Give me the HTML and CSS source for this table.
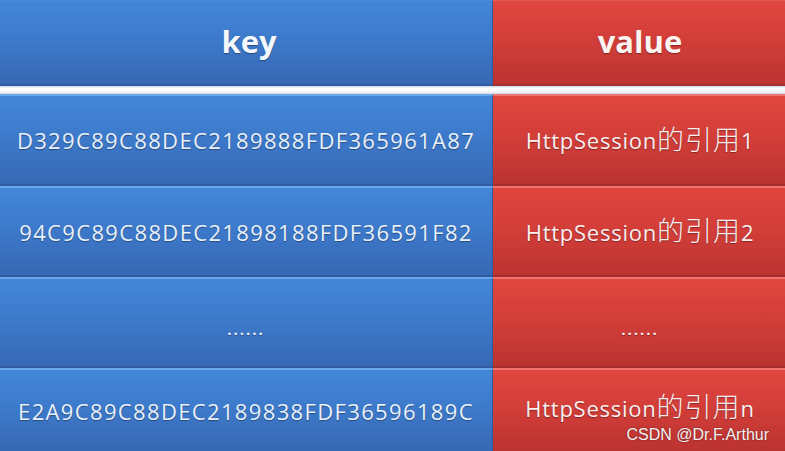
FILE: index.html
```html
<!DOCTYPE html>
<html>
<head>
    <title>Session Map</title>
    <link rel="stylesheet" href="styles.css">
</head>
<body>
    <div class="table">
        <div class="cell head key">key</div>
        <div class="cell head val">value</div>

        <div class="band"></div>

        <div class="cell key">D329C89C88DEC2189888FDF365961A87</div>
        <div class="cell val">HttpSession<span class="cjk">的引用</span>1</div>

        <div class="cell key">94C9C89C88DEC21898188FDF36591F82</div>
        <div class="cell val">HttpSession<span class="cjk">的引用</span>2</div>

        <div class="cell key"><span class="dots">......</span></div>
        <div class="cell val"><span class="dots">......</span></div>

        <div class="cell key last">E2A9C89C88DEC2189838FDF36596189C</div>
        <div class="cell val last up">HttpSession<span class="cjk">的引用</span>n</div>
    </div>
    <div class="mark">CSDN @Dr.F.Arthur</div>
</body>
</html>
```

FILE: styles.css
```css
body {
    margin: 0;
    width: 785px;
    height: 451px;
    overflow: hidden;
    background: #ffffff;
    font-family: 'Open Sans', 'Noto Sans CJK SC', sans-serif;
    position: relative;
}

.table {
    display: grid;
    grid-template-columns: 493px 292px;
    grid-template-rows: 86px 8px 92px 91px 91px 83px;
}

.cell {
    display: flex;
    align-items: center;
    justify-content: center;
    color: #e9f1fb;
    font-size: 22px;
    letter-spacing: 1.35px;
    text-shadow: 0 1px 1px rgba(0,0,0,0.35);
    box-sizing: border-box;
}

.key {
    background: linear-gradient(#4386d8 0%, #3d7acb 45%, #3768b4 100%);
    border-top: 2px solid #6aa6ec;
    border-bottom: 2px solid #2f5ba0;
    border-right: 1px solid #2d5b9c;
}

.val {
    background: linear-gradient(#e0463f 0%, #d33e39 45%, #bb3331 100%);
    border-top: 2px solid #f07470;
    border-bottom: 2px solid #a52c2a;
    color: #fbeeee;
    letter-spacing: 0.75px;
    padding-left: 2px;
}

.head {
    font-size: 31px;
    font-weight: 700;
    letter-spacing: 0;
    padding-bottom: 4px;
    color: #f4f8fd;
    border-top: 1px solid #4b8ad8;
}

.head.key {
    padding-left: 6px;
}

.head.val {
    color: #fdf3f0;
    border-top-color: #e35a52;
}

.band {
    grid-column: 1 / 3;
    background: linear-gradient(#c8d6e6, #ffffff 30%, #f6f6f6 70%, #cfd8e2);
}

.last {
    border-bottom: none;
}

.up {
    padding-bottom: 6px;
}

.cjk {
    font-family: 'Noto Sans CJK SC', sans-serif;
    font-size: 27px;
    font-weight: 300;
    letter-spacing: 1px;
    margin-top: -4px;
}

.dots {
    font-size: 15px;
    font-weight: 700;
    letter-spacing: 2px;
    padding-top: 12px;
}

.mark {
    position: absolute;
    right: 16px;
    bottom: 7px;
    font-family: 'Liberation Sans', Arial, sans-serif;
    font-size: 16px;
    color: #f2f2f2;
    text-shadow: 0 0 2px rgba(0,0,0,0.45);
}
```
